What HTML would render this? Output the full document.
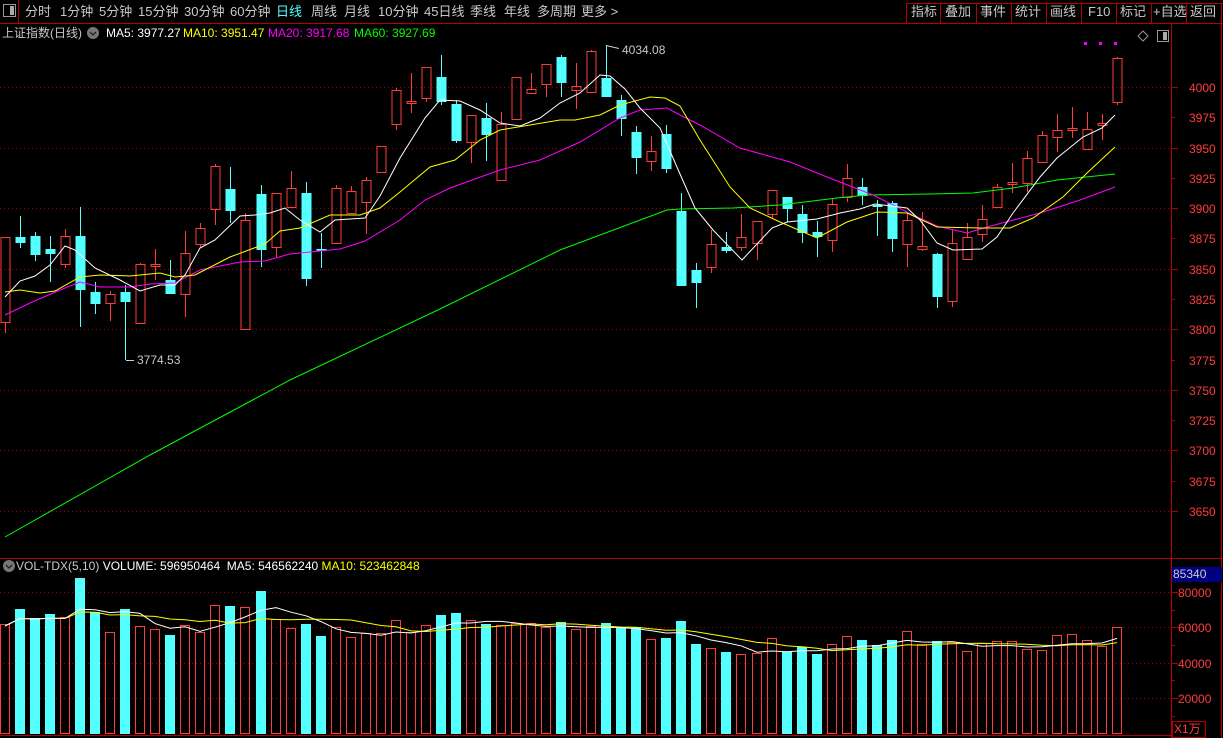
<!DOCTYPE html>
<html><head><meta charset="utf-8">
<style>
html,body{margin:0;padding:0;background:#000;width:1223px;height:738px;overflow:hidden;font-family:"Liberation Sans","Noto Sans CJK SC",sans-serif;}
#wrap{position:relative;width:1223px;height:738px;}
.t{position:absolute;white-space:nowrap;font-size:12px;line-height:14px;}
.tb{position:absolute;top:4px;font-size:13px;color:#c8c8c8;white-space:nowrap;line-height:16px;}
svg{position:absolute;left:0;top:0;}
</style></head><body><div id="wrap">
<svg id="s" width="1223" height="738" xmlns="http://www.w3.org/2000/svg"></svg>
<div class="tb" style="left:25px">分时</div>
<div class="tb" style="left:60px">1分钟</div>
<div class="tb" style="left:99px">5分钟</div>
<div class="tb" style="left:138px">15分钟</div>
<div class="tb" style="left:184px">30分钟</div>
<div class="tb" style="left:230px">60分钟</div>
<div class="tb" style="left:276px;color:#5ff">日线</div>
<div class="tb" style="left:311px">周线</div>
<div class="tb" style="left:344px">月线</div>
<div class="tb" style="left:378px">10分钟</div>
<div class="tb" style="left:424px">45日线</div>
<div class="tb" style="left:470px">季线</div>
<div class="tb" style="left:504px">年线</div>
<div class="tb" style="left:537px">多周期</div>
<div class="tb" style="left:581px">更多 &gt;</div>
<div class="tb" style="left:911px">指标</div>
<div class="tb" style="left:945px">叠加</div>
<div class="tb" style="left:980px">事件</div>
<div class="tb" style="left:1015px">统计</div>
<div class="tb" style="left:1050px">画线</div>
<div class="tb" style="left:1088px">F10</div>
<div class="tb" style="left:1120px">标记</div>
<div class="tb" style="left:1153px">+自选</div>
<div class="tb" style="left:1190px">返回</div>
<div class="t" style="left:2px;top:26px;color:#c8c8c8">上证指数(日线)</div>
<div class="t" style="left:106px;top:26px;color:#fff">MA5: 3977.27</div>
<div class="t" style="left:183px;top:26px;color:#ff0">MA10: 3951.47</div>
<div class="t" style="left:268px;top:26px;color:#f0f">MA20: 3917.68</div>
<div class="t" style="left:354px;top:26px;color:#0f0">MA60: 3927.69</div>
<div class="t" style="left:622px;top:43px;color:#c8c8c8">4034.08</div>
<div class="t" style="left:137px;top:353px;color:#c8c8c8">3774.53</div>
<div class="t" style="left:16px;top:559px;color:#c8c8c8">VOL-TDX(5,10) <span style="color:#fff">VOLUME: 596950464 &nbsp;MA5: 546562240</span> <span style="color:#ff0">MA10: 523462848</span></div>
<div id="ax"></div>
<script>
var s=document.getElementById('s'),h='';
function L(x1,y1,x2,y2,c,w,d){h+='<line x1="'+x1+'" y1="'+y1+'" x2="'+x2+'" y2="'+y2+'" stroke="'+c+'" stroke-width="'+(w||1)+'"'+(d?' stroke-dasharray="'+d+'"':'')+'/>';}
function R(x,y,w,hh,f,st){h+='<rect x="'+x+'" y="'+y+'" width="'+w+'" height="'+hh+'" fill="'+(f||'none')+'"'+(st?' stroke="'+st+'"':'')+'/>';}
var RED='#ff3b3b',CY='#54ffff',AX='#b40000',GR='#a00000';
L(0,23.5,1223,23.5,AX);
L(18.5,0,18.5,23,AX);
R(3.5,4.5,12,12,'none','#999');R(10,6,4,9,'#aaa');
[906,940,976,1011,1046,1081,1116,1151,1186,1221].forEach(function(x){L(x+.5,3,x+.5,23,AX);});
L(906,3.5,1223,3.5,AX);
L(1171.5,24,1171.5,738,AX);L(1221.5,24,1221.5,738,AX);
L(0,558.5,1223,558.5,AX);L(0,735.5,1171,735.5,AX);
var ax='';
function yp(p){return 87+(4000-p)*1.2114;}
for(var p=3650;p<=4000;p+=25){var y=Math.round(yp(p))+.5;
 if(p%50==0){L(0,y,1171,y,GR,1,'1,3');L(1171,y,1178,y,AX);}else L(1171,y,1175,y,AX);
 ax+='<div class="t" style="left:1189px;top:'+(y-7)+'px;color:#ff3c3c">'+p+'</div>';}
[[80000,592],[60000,627],[40000,663],[20000,698]].forEach(function(a){var y=a[1]+.5;L(0,y,1171,y,GR,1,'1,3');L(1171,y,1178,y,AX);
 ax+='<div class="t" style="left:1178px;top:'+(y-7)+'px;color:#ff3c3c">'+a[0]+'</div>';});
[610,645,680,716].forEach(function(y){L(1171,y+.5,1175,y+.5,AX);});
R(1172,567,50,15,'#000080');
ax+='<div class="t" style="left:1173px;top:567px;color:#ccc">85340</div>';
R(1172.5,721.5,33,16,'none',AX);
ax+='<div class="t" style="left:1174px;top:722px;color:#ff3c3c">X1万</div>';
document.getElementById('ax').innerHTML=ax;
h+='<polygon points="1143,31 1148,36 1143,41 1138,36" fill="none" stroke="#999"/>';
R(1157.5,30.5,11,11,'none','#999');R(1163,32,4,8,'#aaa');
[1085,1100,1115].forEach(function(x){R(x-1,42,3,3,'#f0f');});
var C=[[237,322,237,333,1],[237,243,216,248,0],[236,255,232,261,0],[249,254,236,282,0],[236,264,229,268,1],[236,290,207,327,0],[292,304,282,314,0],[294,303,291,321,1],[292,302,285,360,0],[264,323,263,323,1],[264,266,249,280,1],[280,294,260,294,0],[253,294,231,317,1],[228,244,223,247,1],[166,209,164,225,1],[189,211,167,223,0],[220,329,213,329,1],[194,250,185,267,0],[193,247,193,257,1],[188,207,171,207,1],[193,279,182,286,0],[249,251,233,268,0],[188,243,185,243,1],[191,213,186,213,1],[180,202,177,234,1],[146,172,146,172,1],[90,124,88,130,1],[101,103,73,113,1],[67,98,67,102,1],[77,102,55,105,0],[104,141,100,143,0],[115,142,115,163,1],[118,135,103,161,0],[124,180,112,180,1],[77,119,77,119,1],[89,93,73,93,1],[64,84,64,97,1],[57,83,55,97,0],[86,90,63,109,1],[51,92,50,92,1],[78,97,45,97,0],[100,119,95,136,0],[132,158,126,174,0],[151,161,136,171,1],[134,169,125,173,0],[211,286,193,286,0],[270,283,263,308,0],[244,267,230,273,1],[247,251,232,253,0],[237,247,214,251,1],[221,243,221,260,1],[190,214,190,218,1],[197,209,197,222,0],[214,233,205,243,0],[232,237,221,257,0],[204,240,199,252,1],[178,197,164,202,1],[187,196,178,205,0],[205,207,200,236,0],[203,239,201,252,0],[220,244,212,267,1],[246,249,212,251,1],[254,297,253,308,0],[243,301,230,307,1],[237,259,223,259,1],[219,234,205,242,1],[187,207,184,207,1],[182,184,163,193,1],[158,183,151,192,1],[135,162,131,162,1],[130,137,114,152,1],[128,130,107,138,1],[129,149,112,149,1],[123,125,114,140,1],[58,102,57,105,1]];
function X(i){return 5+15.03*i;}
C.forEach(function(c,i){var x=Math.round(X(i))+.5,col=c[4]?RED:CY;
 if(c[4]){L(x,c[2],x,c[0],col);L(x,c[1],x,c[3],col);R(x-4.5,c[0]+.5,9,Math.max(c[1]-c[0],1),'none',col);}
 else{L(x,c[2],x,c[3],col);R(x-5,c[0],10,Math.max(c[1]-c[0],1),col);}});
L(126,360.5,134,360.5,'#ccc');
L(606,45.5,619,48.5,'#ccc');
function P(pts,c){h+='<polyline points="'+pts.map(function(p){return p.join(',')}).join(' ')+'" fill="none" stroke="'+c+'" stroke-width="1"/>';}
P([[5,537],[150,455],[290,380],[440,309],[560,250],[667,210],[680,209],[733,208],[780,205],[837,198],[867,195],[930,194],[973,193],[1013,188],[1057,180],[1115,174]],'#0f0');
P([[5,315],[30,303],[60,290],[80,282],[100,287],[130,287],[150,284],[175,283],[200,270],[240,262],[265,261],[290,254],[320,251],[340,249],[365,241],[400,220],[425,200],[450,188],[500,170],[540,160],[580,142],[620,118],[640,110],[667,108],[680,115],[700,125],[740,148],[790,162],[827,177],[873,195],[913,215],[937,226],[967,233],[987,227],[1040,213],[1080,200],[1115,187]],'#f0f');
P([[5,292],[20,290],[40,293],[55,291],[80,277],[100,275],[130,276],[160,273],[175,277],[195,275],[230,257],[265,244],[280,231],[300,228],[330,215],[360,215],[380,208],[400,192],[430,167],[455,160],[480,140],[500,130],[530,125],[560,120],[575,120],[600,115],[620,105],[650,97],[665,98],[680,106],[700,140],[730,187],[750,208],[780,222],[817,238],[847,222],[877,212],[907,213],[937,227],[980,228],[1010,228],[1033,218],[1063,197],[1087,173],[1115,147]],'#ff0');
P([[5,297],[20,281],[35,276],[50,265],[65,246],[75,250],[95,268],[120,280],[140,291],[160,285],[175,285],[185,275],[200,248],[215,240],[240,216],[255,215],[270,213],[285,208],[300,220],[320,232],[335,220],[365,218],[380,196],[400,158],[425,118],[440,100],[460,101],[480,110],[500,123],[520,126],[540,118],[560,103],[580,93],[600,75],[610,76],[625,89],[640,108],[660,128],[680,174],[695,208],[713,230],[742,260],[772,228],[787,222],[817,219],[840,213],[860,209],[875,204],[907,208],[920,220],[937,243],[953,250],[982,249],[997,237],[1013,213],[1040,177],[1057,158],[1083,137],[1102,128],[1115,115]],'#fff');
var V=[624,609,618,614,617,578,612,632,609,626,629,635,625,632,605,606,607,591,619,628,624,636,627,637,633,633,620,632,625,615,613,620,624,625,623,623,627,622,629,626,623,628,627,639,638,621,644,648,652,654,653,638,652,647,654,644,636,640,645,640,631,644,641,642,651,643,641,641,649,650,635,634,640,646,627];
V.forEach(function(t,i){var x=Math.round(X(i)),col=C[i][4]?RED:CY;
 if(C[i][4])R(x-4.5,t+.5,9,733-t,'none',col);else R(x-5,t,10,734-t,col);});
function ma(n){var pts=[];for(var i=0;i<V.length;i++){var s2=0,k=0;for(var j=Math.max(0,i-n+1);j<=i;j++){s2+=V[j];k++;}pts.push([Math.round(X(i)),(s2/k+2).toFixed(1)]);}return pts;}
P(ma(10),'#ff0');P(ma(5),'#fff');
h+='<circle cx="9" cy="566" r="6" fill="#777"/><polyline points="6,565 9,568 12,565" fill="none" stroke="#222" stroke-width="1.3"/>';
h+='<circle cx="93" cy="33" r="6" fill="#777"/><polyline points="90,32 93,35 96,32" fill="none" stroke="#222" stroke-width="1.3"/>';
s.innerHTML=h;
</script>
</div></body></html>
